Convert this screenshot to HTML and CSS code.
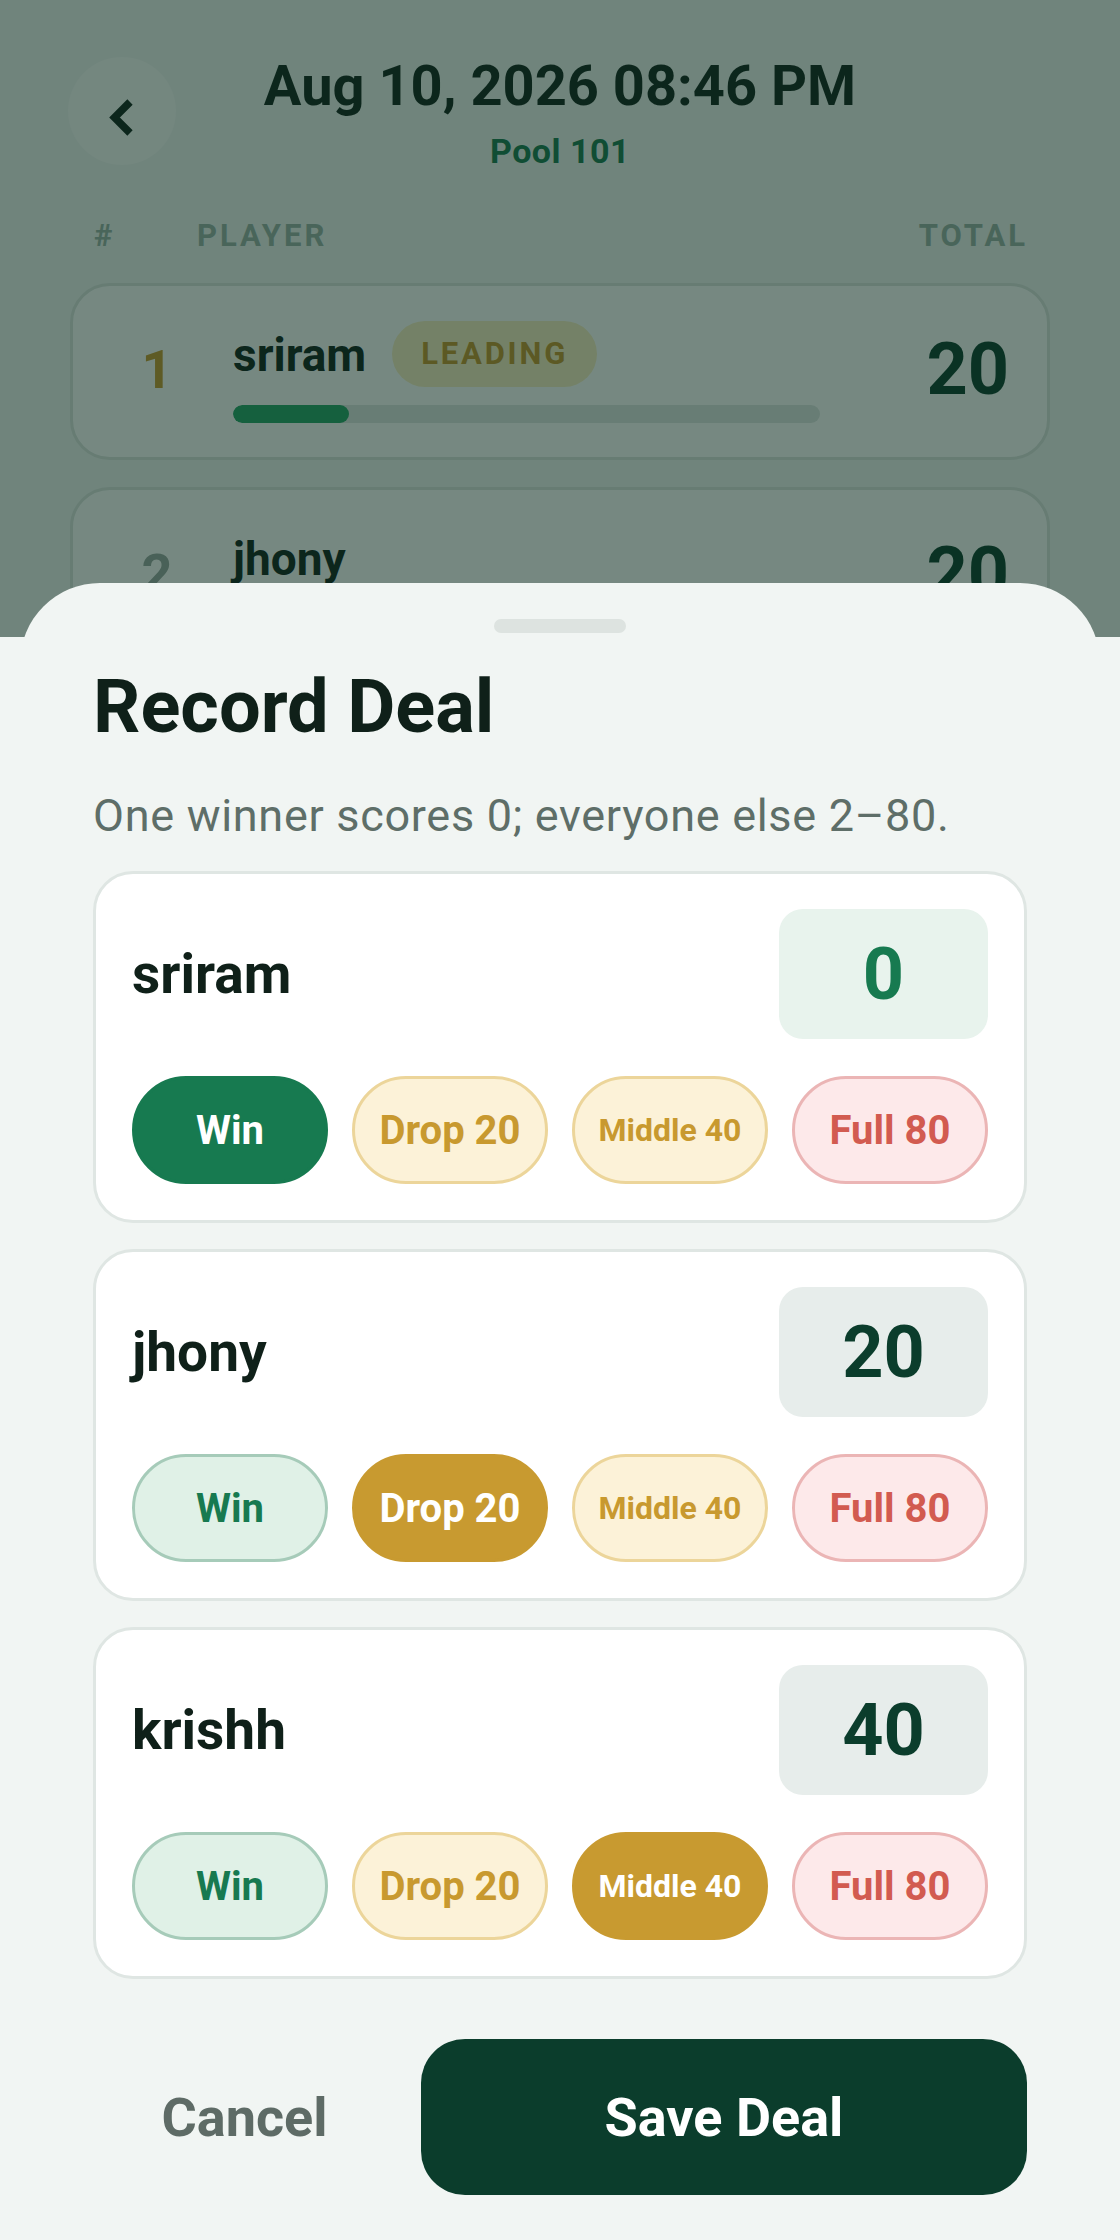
FILE: index.html
```html
<!DOCTYPE html>
<html lang="en">
<head>
<meta charset="utf-8">
<title>Record Deal</title>
<link rel="stylesheet" href="styles.css">
</head>
<body>
<div class="screen">
  <header class="top">
    <button class="back" aria-label="Back">
      <svg width="108" height="108" viewBox="0 0 108 108"><path d="M62 45 L46.5 60.5 L62 76" fill="none" stroke="#0f2019" stroke-width="7.5"/></svg>
    </button>
    <div class="heading">
      <div class="date">Aug 10, 2026 08:46 PM</div>
      <div class="pool">Pool 101</div>
    </div>
    <div class="spacer"></div>
  </header>
  <div class="cols">
    <span>#</span><span>PLAYER</span><span class="c-total">TOTAL</span>
  </div>
  <div class="rows">
    <div class="row">
      <div class="rank rank-1">1</div>
      <div class="namecol">
        <div class="namerow"><span class="pname">sriram</span><span class="badge">LEADING</span></div>
        <div class="track"><div class="fill" style="width:19.8%"></div></div>
      </div>
      <div class="total">20</div>
    </div>
    <div class="row">
      <div class="rank rank-2">2</div>
      <div class="namecol">
        <div class="namerow"><span class="pname">jhony</span></div>
        <div class="track"><div class="fill" style="width:19.8%"></div></div>
      </div>
      <div class="total">20</div>
    </div>
    <div class="row">
      <div class="rank rank-3">3</div>
      <div class="namecol">
        <div class="namerow"><span class="pname">krishh</span></div>
        <div class="track"><div class="fill" style="width:39.6%"></div></div>
      </div>
      <div class="total">40</div>
    </div>
  </div>
</div>
<div class="backdrop"></div>
<div class="sheet-layer">
  <div class="sheet">
    <div class="handle"></div>
    <h1 class="title">Record Deal</h1>
    <p class="sub">One winner scores 0; everyone else 2–80.</p>
    <div class="deals">
      <div class="deal">
        <div class="deal-top">
          <span class="dname">sriram</span>
          <div class="score score-win">0</div>
        </div>
        <div class="opts">
          <button class="opt win on">Win</button>
          <button class="opt gold">Drop 20</button>
          <button class="opt gold small">Middle 40</button>
          <button class="opt red">Full 80</button>
        </div>
      </div>
      <div class="deal">
        <div class="deal-top">
          <span class="dname">jhony</span>
          <div class="score">20</div>
        </div>
        <div class="opts">
          <button class="opt win">Win</button>
          <button class="opt gold on">Drop 20</button>
          <button class="opt gold small">Middle 40</button>
          <button class="opt red">Full 80</button>
        </div>
      </div>
      <div class="deal">
        <div class="deal-top">
          <span class="dname">krishh</span>
          <div class="score">40</div>
        </div>
        <div class="opts">
          <button class="opt win">Win</button>
          <button class="opt gold">Drop 20</button>
          <button class="opt gold small on">Middle 40</button>
          <button class="opt red">Full 80</button>
        </div>
      </div>
    </div>
    <div class="footer">
      <button class="cancel">Cancel</button>
      <button class="save">Save Deal</button>
    </div>
  </div>
</div>
</body>
</html>
```

FILE: styles.css
```css
* { box-sizing: border-box; }
html, body { margin: 0; padding: 0; }
body {
  width: 1120px;
  height: 2240px;
  overflow: hidden;
  position: relative;
  background: #f1f5f3;
  font-family: Roboto, "Noto Sans", sans-serif;
  color: #0f2019;
}
button { font-family: inherit; border: 0; background: none; padding: 0; cursor: pointer; }

.screen { padding-top: 53px; }
.top {
  display: grid;
  grid-template-columns: 108px 1fr 108px;
  padding: 0 68px;
  align-items: start;
}
.back {
  width: 108px;
  height: 108px;
  margin-top: 4px;
  border-radius: 50%;
  background: #fafcfb;
  display: flex;
}
.heading { text-align: center; }
.date { font-size: 56px; font-weight: 700; line-height: 66px; color: #0f2019; }
.pool { margin-top: 12px; font-size: 34px; font-weight: 700; line-height: 40px; color: #177a50; letter-spacing: 0.5px; }

.cols {
  margin-top: 47px;
  display: grid;
  grid-template-columns: 103px 1fr auto;
  padding: 0 92px 0 94px;
  font-size: 31px;
  font-weight: 700;
  line-height: 36px;
  letter-spacing: 3px;
  color: #98b0a6;
}

.rows { margin-top: 29px; padding: 0 70px; display: flex; flex-direction: column; gap: 27px; }
.row {
  height: 177px;
  background: #ffffff;
  border: 3px solid #dce3e0;
  border-radius: 40px;
  display: flex;
  align-items: center;
  padding: 0 38px 0 42px;
}
.rank { width: 84px; text-align: center; font-size: 54px; font-weight: 700; margin-top: -4px; }
.rank-1 { color: #c9992f; }
.rank-2 { color: #9aa7a1; }
.rank-3 { color: #b98a63; }
.namecol { flex: 1; margin: 0 39px 0 34px; }
.namerow { display: flex; align-items: center; gap: 26px; min-height: 66px; }
.pname { font-size: 46px; font-weight: 700; line-height: 54px; margin-top: 2px; }
.badge {
  height: 66px;
  line-height: 66px;
  padding: 0 29px;
  border-radius: 33px;
  background: #fbf0c4;
  color: #c4952c;
  font-size: 31px;
  font-weight: 700;
  letter-spacing: 2.8px;
}
.track { margin-top: 18px; height: 18px; border-radius: 9px; background: #e0e7e4; overflow: hidden; }
.fill { height: 100%; border-radius: 9px; background: #24a468; }
.total { width: 150px; text-align: right; font-size: 72px; font-weight: 700; color: #0b3d2c; margin-top: -4px; }

.backdrop { position: absolute; inset: 0; background: rgba(10, 42, 30, 0.56); }

.sheet-layer { position: absolute; left: 0; right: 0; bottom: 0; }
.sheet-layer::before {
  content: "";
  position: absolute;
  left: 0; right: 0; top: 54px; bottom: 0;
  background: #f1f5f3;
}
.sheet {
  position: relative;
  margin: 0 20px;
  background: #f1f5f3;
  border-radius: 80px 80px 0 0;
  padding: 36px 73px 45px;
}
.handle { width: 132px; height: 14px; border-radius: 7px; background: #dde3e0; margin: 0 auto; }
.title { margin: 30px 0 0; font-size: 74px; line-height: 88px; font-weight: 700; color: #0f2019; }
.sub { margin: 36px 0 0; font-size: 45px; line-height: 58px; letter-spacing: 0.7px; color: #5e6e68; }

.deals { margin-top: 26px; display: flex; flex-direction: column; gap: 26px; }
.deal {
  background: #ffffff;
  border: 3px solid #dfe6e3;
  border-radius: 40px;
  padding: 35px 36px 36px;
}
.deal-top { display: flex; align-items: center; justify-content: space-between; }
.dname { font-size: 55px; font-weight: 700; line-height: 64px; color: #0f2019; }
.score {
  width: 209px;
  height: 130px;
  border-radius: 24px;
  background: #e7edeb;
  color: #0b3d2c;
  font-size: 72px;
  font-weight: 700;
  display: flex;
  align-items: center;
  justify-content: center;
}
.score-win { background: #e8f3ed; color: #177a50; }

.opts { margin-top: 37px; display: grid; grid-template-columns: repeat(4, 1fr); gap: 24px; }
.opt {
  height: 108px;
  border-radius: 54px;
  border: 3px solid transparent;
  font-size: 40px;
  font-weight: 700;
  display: flex;
  align-items: center;
  justify-content: center;
}
.opt.small { font-size: 32px; }
.opt.win { background: #e0f1e7; border-color: #a6cbb9; color: #177a50; }
.opt.win.on { background: #177a50; border-color: #177a50; color: #ffffff; }
.opt.gold { background: #fcf2d8; border-color: #ecd59a; color: #c8992f; }
.opt.gold.on { background: #c89a30; border-color: #c89a30; color: #ffffff; }
.opt.red { background: #fde9ea; border-color: #ebb5b5; color: #d25b50; }

.footer { margin-top: 60px; display: flex; gap: 25px; }
.cancel { flex: 1; height: 156px; font-size: 54px; font-weight: 700; color: #5e6b66; }
.save {
  flex: 2;
  height: 156px;
  border-radius: 44px;
  background: #0b3d2c;
  color: #ffffff;
  font-size: 54px;
  font-weight: 700;
}
```
